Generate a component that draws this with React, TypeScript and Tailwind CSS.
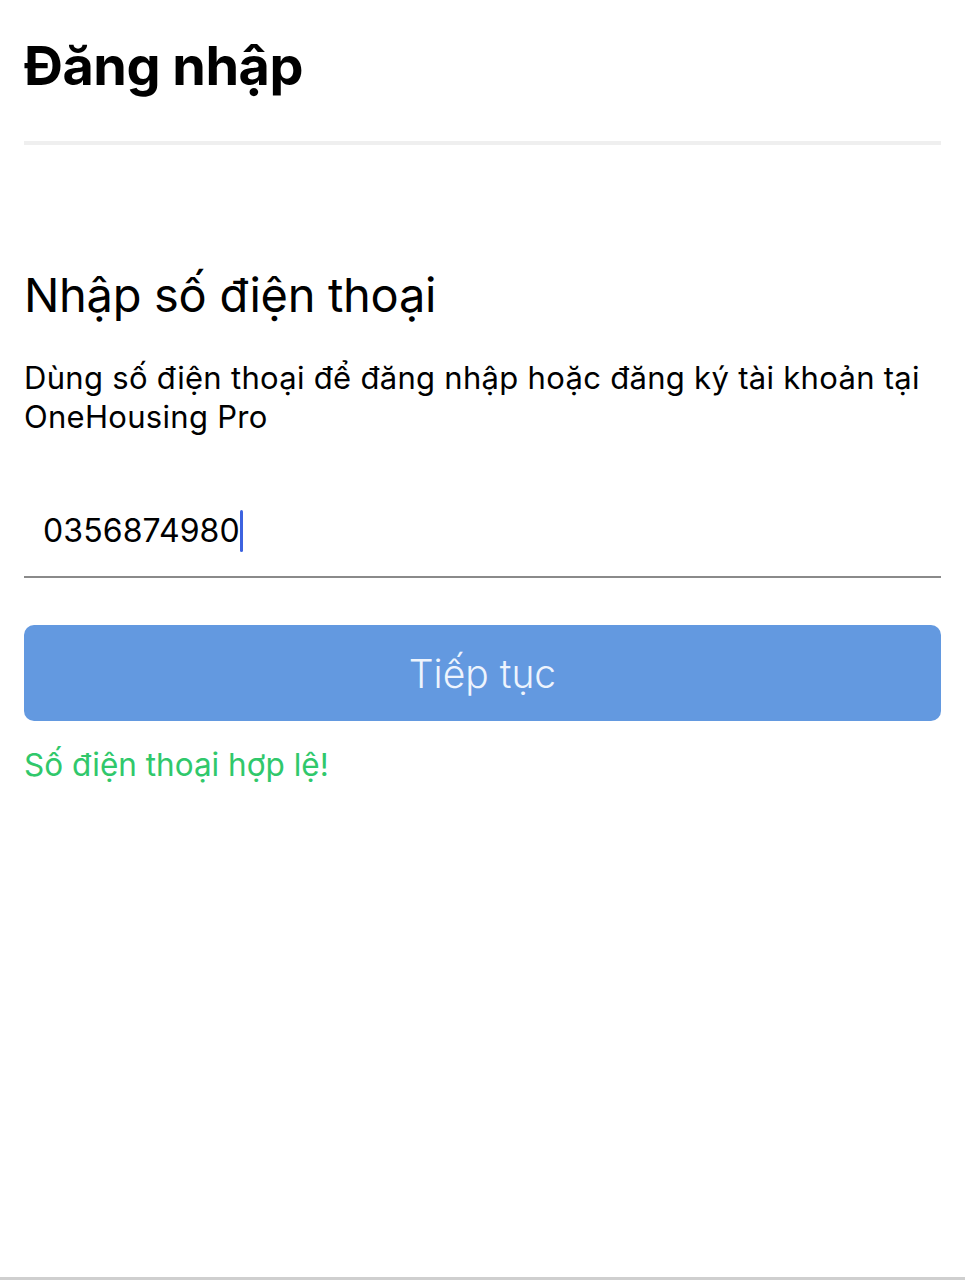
import { useState } from 'react';

function App() {
	const [phone] = useState('0356874980');

	return (
		<div className="min-h-[1280px] bg-white font-['Inter','Noto_Sans',sans-serif] text-black flex flex-col">
			<div className="px-6 flex-1">
				<h1 className="pt-[34px] pb-[43px] text-[54px] leading-[64px] font-bold tracking-[-0.5px]">
					Đăng nhập
				</h1>
				<div className="h-1 bg-[#efefef]" />

				<h2 className="mt-[122px] text-[47px] leading-[56px] font-normal tracking-[-0.3px]">
					Nhập số điện thoại
				</h2>
				<p className="mt-[35px] text-[31px] leading-[39px] tracking-[0.3px]">
					Dùng số điện thoại để đăng nhập hoặc đăng ký tài khoản tại OneHousing Pro
				</p>

				<div className="mt-[73px] border-b-2 border-[#8a8a8a] pl-[19px] pb-[23px] flex items-center">
					<span className="text-[32px] leading-[44px] tracking-[0.1px]">{phone}</span>
					<span className="w-[3px] h-[42px] bg-[#3d63e0] rounded-full" />
				</div>

				<button className="mt-[47px] w-full h-[96px] rounded-[10px] bg-[#6399e0] text-[#eef4fd] text-[39px] font-light pt-[3px]">
					Tiếp tục
				</button>

				<p className="mt-[24px] text-[31.5px] leading-[40px] text-[#30c86b]">
					Số điện thoại hợp lệ!
				</p>
			</div>
			<div className="h-[3px] bg-[#cfcfcf]" />
		</div>
	);
}

export default App;
